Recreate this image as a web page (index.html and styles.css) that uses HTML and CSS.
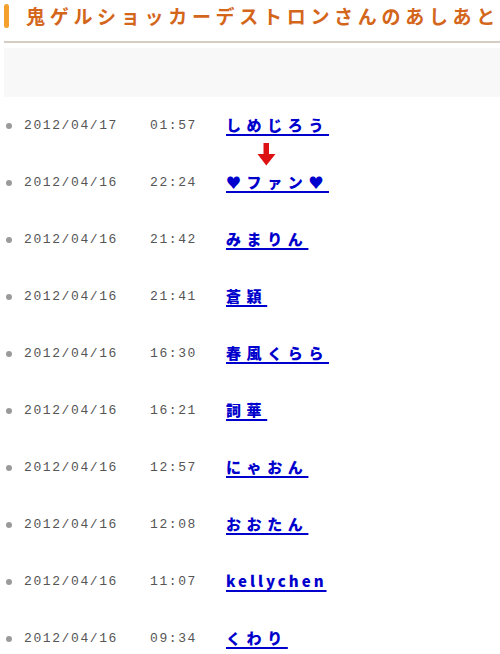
FILE: index.html
```html
<!DOCTYPE html>
<html lang="ja">
<head>
<meta charset="UTF-8" />
<meta name="viewport" content="width=device-width, initial-scale=1" />
<title>あしあと</title>
<link rel="stylesheet" href="styles.css">
</head>
<body>

<!-- Title -->
<div class="header">
  <span class="headerBar"></span>
  <h1 class="headerTitle">鬼ゲルショッカーデストロンさんのあしあと</h1>
</div>

<!-- Empty notice box -->
<div class="noticeBox"></div>

<!-- Footprints -->
<ul class="footList">
  <li class="footItem"><span class="footDate">2012/04/17</span><span class="footTime">01:57</span><a class="footName" href="#">しめじろう</a></li>
  <li class="footItem"><span class="footDate">2012/04/16</span><span class="footTime">22:24</span><a class="footName" href="#">♥ファン♥</a></li>
  <li class="footItem"><span class="footDate">2012/04/16</span><span class="footTime">21:42</span><a class="footName" href="#">みまりん</a></li>
  <li class="footItem"><span class="footDate">2012/04/16</span><span class="footTime">21:41</span><a class="footName" href="#">蒼穎</a></li>
  <li class="footItem"><span class="footDate">2012/04/16</span><span class="footTime">16:30</span><a class="footName" href="#">春風くらら</a></li>
  <li class="footItem"><span class="footDate">2012/04/16</span><span class="footTime">16:21</span><a class="footName" href="#">詞華</a></li>
  <li class="footItem"><span class="footDate">2012/04/16</span><span class="footTime">12:57</span><a class="footName" href="#">にゃおん</a></li>
  <li class="footItem"><span class="footDate">2012/04/16</span><span class="footTime">12:08</span><a class="footName" href="#">おおたん</a></li>
  <li class="footItem"><span class="footDate">2012/04/16</span><span class="footTime">11:07</span><a class="footName latin" href="#">kellychen</a></li>
  <li class="footItem"><span class="footDate">2012/04/16</span><span class="footTime">09:34</span><a class="footName" href="#">くわり</a></li>

  <!-- red arrow mark -->
  <svg class="redArrow" width="19" height="23" viewBox="0 0 19 23">
    <path d="M6.5 0 H12 V11 H18.5 L9.3 22.5 L0.5 11 H6.5 Z" fill="#dd1111"/>
  </svg>
</ul>

</body>
</html>
```

FILE: styles.css
```css
body {
  margin: 0;
  background: white;
  font-family: "Noto Sans CJK JP", sans-serif;
  overflow: hidden;
}

/* Title */
.header {
  display: flex;
  align-items: center;
  height: 41px;
  margin-left: 4px;
  border-bottom: 2px solid #d6ccc1;
}
.headerBar {
  width: 6px;
  height: 24px;
  margin-top: -9px;
  border-radius: 3px;
  background: #f4a02c;
}
.headerTitle {
  margin: -10px 0 0 17px;
  font-size: 19px;
  font-weight: bold;
  letter-spacing: 4.7px;
  color: #d4661c;
  white-space: nowrap;
  line-height: 24px;
}

/* Empty box */
.noticeBox {
  height: 49px;
  margin: 5px 0 0 4px;
  background: #f8f8f8;
}

/* Footprint list */
.footList {
  position: relative;
  list-style: none;
  margin: 0;
  padding: 0;
}
.footItem {
  display: flex;
  align-items: center;
  height: 57px;
  padding-left: 6px;
}
.footItem::before {
  content: "";
  width: 6px;
  height: 6px;
  margin-right: 12px;
  margin-top: 1px;
  border-radius: 50%;
  background: #9a9a9a;
}
.footDate,
.footTime {
  font-family: "Liberation Mono", monospace;
  font-size: 13px;
  letter-spacing: 1.6px;
  color: #555;
}
.footDate {
  width: 126px;
}
.footTime {
  width: 76px;
}
.footName {
  margin-top: -2px;
  font-size: 15px;
  font-weight: 900;
  letter-spacing: 5.6px;
  color: #0000cc;
  text-decoration: underline;
  text-underline-offset: 3px;
  text-decoration-thickness: 2px;
}
.footName.latin {
  letter-spacing: 3px;
}

.redArrow {
  position: absolute;
  top: 46px;
  left: 257px;
}
```
